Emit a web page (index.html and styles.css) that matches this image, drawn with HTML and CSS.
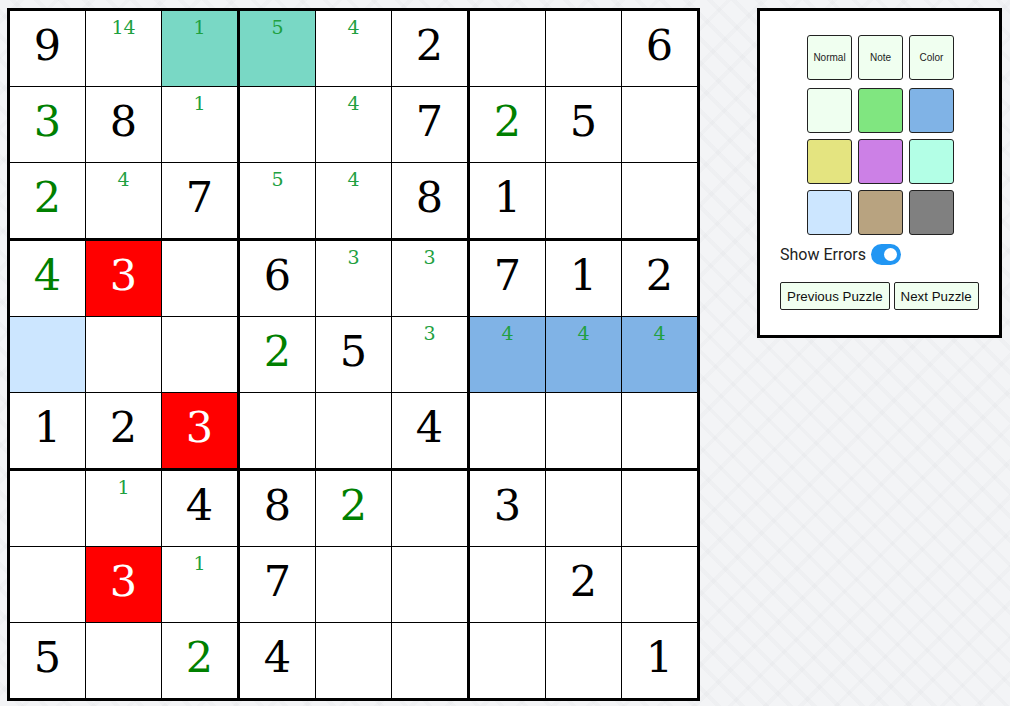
FILE: index.html
```html
<!DOCTYPE html>
<html>
<head>
<meta charset="utf-8">
<link rel="stylesheet" href="styles.css">
</head>
<body>
<div class="app">
  <div class="board">
    <div class="box">
      <div class="cell big">9</div>
      <div class="cell note">14</div>
      <div class="cell note teal">1</div>
      <div class="cell big given">3</div>
      <div class="cell big">8</div>
      <div class="cell note">1</div>
      <div class="cell big given">2</div>
      <div class="cell note">4</div>
      <div class="cell big">7</div>
    </div>
    <div class="box">
      <div class="cell note teal">5</div>
      <div class="cell note">4</div>
      <div class="cell big">2</div>
      <div class="cell"></div>
      <div class="cell note">4</div>
      <div class="cell big">7</div>
      <div class="cell note">5</div>
      <div class="cell note">4</div>
      <div class="cell big">8</div>
    </div>
    <div class="box">
      <div class="cell"></div>
      <div class="cell"></div>
      <div class="cell big">6</div>
      <div class="cell big given">2</div>
      <div class="cell big">5</div>
      <div class="cell"></div>
      <div class="cell big">1</div>
      <div class="cell"></div>
      <div class="cell"></div>
    </div>
    <div class="box">
      <div class="cell big given">4</div>
      <div class="cell big error">3</div>
      <div class="cell"></div>
      <div class="cell lightblue"></div>
      <div class="cell"></div>
      <div class="cell"></div>
      <div class="cell big">1</div>
      <div class="cell big">2</div>
      <div class="cell big error">3</div>
    </div>
    <div class="box">
      <div class="cell big">6</div>
      <div class="cell note">3</div>
      <div class="cell note">3</div>
      <div class="cell big given">2</div>
      <div class="cell big">5</div>
      <div class="cell note">3</div>
      <div class="cell"></div>
      <div class="cell"></div>
      <div class="cell big">4</div>
    </div>
    <div class="box">
      <div class="cell big">7</div>
      <div class="cell big">1</div>
      <div class="cell big">2</div>
      <div class="cell note blue">4</div>
      <div class="cell note blue">4</div>
      <div class="cell note blue">4</div>
      <div class="cell"></div>
      <div class="cell"></div>
      <div class="cell"></div>
    </div>
    <div class="box">
      <div class="cell"></div>
      <div class="cell note">1</div>
      <div class="cell big">4</div>
      <div class="cell"></div>
      <div class="cell big error">3</div>
      <div class="cell note">1</div>
      <div class="cell big">5</div>
      <div class="cell"></div>
      <div class="cell big given">2</div>
    </div>
    <div class="box">
      <div class="cell big">8</div>
      <div class="cell big given">2</div>
      <div class="cell"></div>
      <div class="cell big">7</div>
      <div class="cell"></div>
      <div class="cell"></div>
      <div class="cell big">4</div>
      <div class="cell"></div>
      <div class="cell"></div>
    </div>
    <div class="box">
      <div class="cell big">3</div>
      <div class="cell"></div>
      <div class="cell"></div>
      <div class="cell"></div>
      <div class="cell big">2</div>
      <div class="cell"></div>
      <div class="cell"></div>
      <div class="cell"></div>
      <div class="cell big">1</div>
    </div>
  </div>

  <div class="panel">
    <div class="modes">
      <button class="tile mode">Normal</button>
      <button class="tile mode">Note</button>
      <button class="tile mode">Color</button>
    </div>
    <div class="swatches">
      <button class="tile sw-honeydew"></button>
      <button class="tile sw-green"></button>
      <button class="tile sw-blue"></button>
      <button class="tile sw-yellow"></button>
      <button class="tile sw-purple"></button>
      <button class="tile sw-mint"></button>
      <button class="tile sw-lightblue"></button>
      <button class="tile sw-tan"></button>
      <button class="tile sw-grey"></button>
    </div>
    <div class="errors">
      <span class="errors-label">Show Errors</span>
      <span class="toggle"><span class="knob"></span></span>
    </div>
    <div class="nav">
      <button class="nav-btn">Previous Puzzle</button>
      <button class="nav-btn">Next Puzzle</button>
    </div>
  </div>
</div>
</body>
</html>
```

FILE: styles.css
```css
html, body {
  margin: 0;
  padding: 0;
}

body {
  width: 1010px;
  height: 706px;
  overflow: hidden;
  background-color: #f3f4f6;
  background-image:
    repeating-linear-gradient(45deg, rgba(0,0,0,0) 0 13px, rgba(120,125,135,0.035) 13px 17px),
    repeating-linear-gradient(-45deg, rgba(0,0,0,0) 0 21px, rgba(120,125,135,0.03) 21px 25px);
  font-family: "Liberation Sans", Arial, sans-serif;
}

.app {
  display: flex;
  align-items: flex-start;
  gap: 57px;
  padding: 8px 0 0 7px;
}

.board {
  display: grid;
  grid-template-columns: repeat(3, 227px);
  grid-template-rows: repeat(3, 227px);
  gap: 3px;
  padding: 3px;
  background: #000;
}

.box {
  display: grid;
  grid-template-columns: repeat(3, 75px);
  grid-template-rows: repeat(3, 75px);
  gap: 1px;
}

.cell {
  background: #fff;
  display: flex;
  justify-content: center;
  font-family: "DejaVu Serif", serif;
  color: #000;
}

.cell.big {
  align-items: center;
  font-size: 43px;
  line-height: 43px;
  padding-bottom: 7px;
}

.cell.note {
  align-items: flex-start;
  font-size: 19px;
  line-height: 22px;
  padding-top: 5px;
  color: #20a040;
}

.cell.given {
  color: #008000;
}

.cell.error {
  background: #ff0000;
  color: #fff;
}

.cell.teal {
  background: #79d8c5;
}

.cell.blue {
  background: #80b3e6;
}

.cell.lightblue {
  background: #cce6ff;
}

.panel {
  box-sizing: border-box;
  width: 245px;
  height: 330px;
  border: 3px solid #000;
  background: #fff;
  padding: 24px 20px 0 20px;
}

.modes,
.swatches {
  display: grid;
  grid-template-columns: repeat(3, 45px);
  gap: 6px;
  margin-left: 27px;
}

.modes {
  margin-bottom: 8px;
}

.tile {
  box-sizing: border-box;
  width: 45px;
  height: 45px;
  margin: 0;
  padding: 0;
  border: 1px solid #222;
  border-radius: 3px;
  background: #f0fff0;
  font-family: "Liberation Sans", Arial, sans-serif;
  font-size: 10px;
  color: #222;
}

.sw-honeydew { background: #effff0; }
.sw-green { background: #80e680; }
.sw-blue { background: #80b3e6; }
.sw-yellow { background: #e4e480; }
.sw-purple { background: #cc80e6; }
.sw-mint { background: #b3ffe6; }
.sw-lightblue { background: #cce6ff; }
.sw-tan { background: #b8a380; }
.sw-grey { background: #808080; }

.errors {
  display: flex;
  align-items: center;
  gap: 5px;
  margin-top: 9px;
  height: 21px;
}

.errors-label {
  font-family: Roboto, "Liberation Sans", sans-serif;
  font-size: 16px;
  color: #222;
}

.toggle {
  box-sizing: border-box;
  width: 30px;
  height: 21px;
  border-radius: 11px;
  background: #2196f3;
  display: flex;
  align-items: center;
  justify-content: flex-end;
  padding-right: 4px;
}

.knob {
  width: 13px;
  height: 13px;
  border-radius: 50%;
  background: #fff;
}

.nav {
  display: flex;
  gap: 4px;
  margin-top: 17px;
}

.nav-btn {
  box-sizing: border-box;
  height: 28px;
  margin: 0;
  padding: 0 6px;
  border: 1px solid #222;
  border-radius: 2px;
  background: #f0fff0;
  font-family: "Liberation Sans", Arial, sans-serif;
  font-size: 13.33px;
  color: #111;
}
```
